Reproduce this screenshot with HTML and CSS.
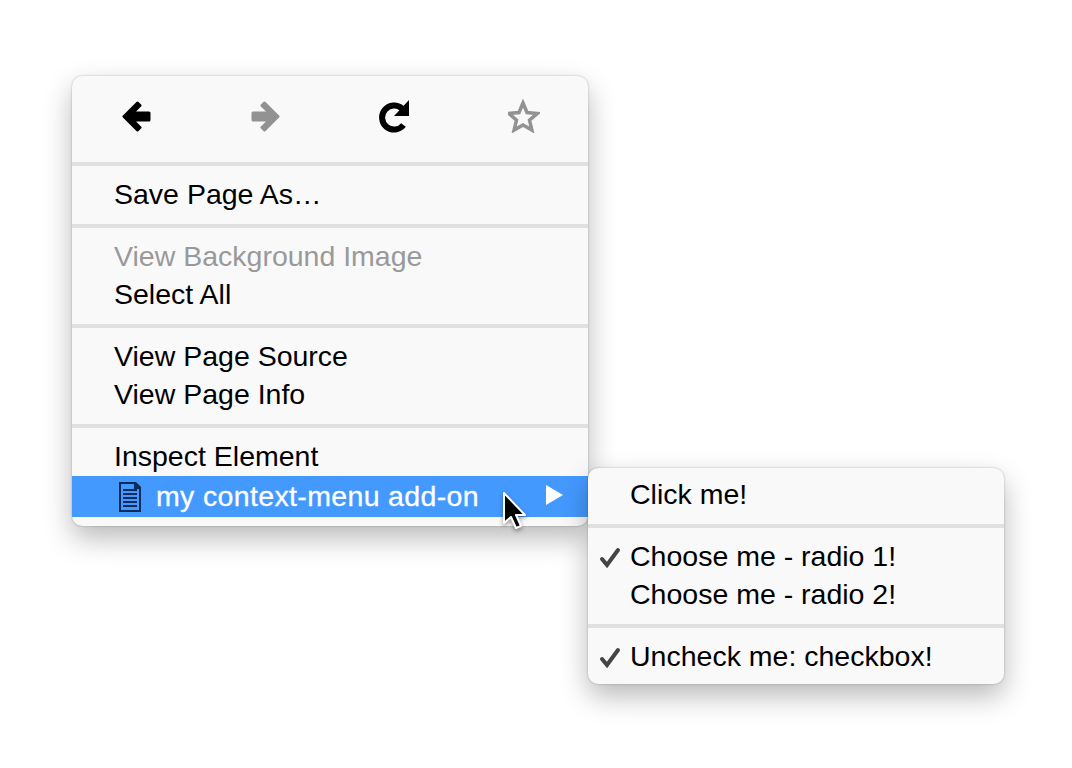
FILE: index.html
```html
<!DOCTYPE html>
<html>
	<head>
		<meta charset="utf-8" />
		<title>Context menu</title>
		<link rel="stylesheet" href="styles.css">
	</head>
	<body>
		<div class="menu main-menu">
			<div class="toolbar">
				<span class="tool">
					<svg width="30" height="34" viewBox="0 0 30 34"><path class="black" d="M2 17.500 15.500 4 18 6.500 10.500 14H27v7H10.500L18 28.500 15.500 31z"/></svg>
				</span>
				<span class="tool">
					<svg width="30" height="34" viewBox="0 0 30 34"><path class="gray" d="M27 17.500 13.500 4 11 6.500 18.500 14H2v7h16.500L11 28.500 13.500 31z"/></svg>
				</span>
				<span class="tool">
					<svg width="31" height="34" viewBox="0 0 31 34">
						<path class="ring" d="M24.500 26A12 12 0 1 1 23 9.500"/>
						<path class="tip" d="M30 1v16H15z"/>
					</svg>
				</span>
				<span class="tool">
					<svg width="32" height="34" viewBox="0 0 32 34"><path class="star" d="M15 4l4 9.500 10.300.900-7.800 6.700 2.400 10L15 26l-8.900 5.100 2.400-10-7.800-6.700L11 13.500z"/></svg>
				</span>
			</div>
			<div class="group">
				<div class="item">Save Page As…</div>
			</div>
			<div class="group">
				<div class="item disabled">View Background Image</div>
				<div class="item">Select All</div>
			</div>
			<div class="group">
				<div class="item">View Page Source</div>
				<div class="item">View Page Info</div>
			</div>
			<div class="group last">
				<div class="item">Inspect Element</div>
				<div class="item active">
					<svg class="doc" width="24" height="32" viewBox="0 0 24 32">
						<path class="doc-page" d="M2 2h15l5 5v23H2z"/>
						<path class="doc-fold" d="M16 1h2l5 5v2h-7z"/>
						<path class="doc-lines" d="M5 9h14M5 13h14M5 17h14M5 21h14M5 25h14"/>
					</svg>
					<span class="active-label">my context-menu add-on</span>
					<span class="arrow"></span>
				</div>
			</div>

			<svg class="cursor" width="30" height="42" viewBox="0 0 30 42">
				<path d="M3 2v30l7-6 5 11 5-2-5-11h9z"/>
			</svg>

			<div class="menu sub-menu">
				<div class="group first">
					<div class="item">Click me!</div>
				</div>
				<div class="group">
					<div class="item">
						<svg class="check" width="24" height="26" viewBox="0 0 24 26"><path d="M5 14l5 6L21 5"/></svg>
						Choose me - radio 1!
					</div>
					<div class="item">Choose me - radio 2!</div>
				</div>
				<div class="group last">
					<div class="item">
						<svg class="check" width="24" height="26" viewBox="0 0 24 26"><path d="M5 14l5 6L21 5"/></svg>
						Uncheck me: checkbox!
					</div>
				</div>
			</div>
		</div>
	</body>
</html>
```

FILE: styles.css
```css
html,body{
	height: 768px;
}
body{
	box-sizing: border-box;
	margin: 0;
	padding: 76px 0 0 72px;
	background-color: white;
	font-family: "Liberation Sans", Arial, sans-serif;
	font-size: 28.500px;
	color: #000;
}
.menu{
	background-color: #f9f9f9;
	border-radius: 10px;
	box-shadow: 0 0 2px rgba(0,0,0,.3), 0 12px 28px rgba(0,0,0,.28);
}
.main-menu{
	position: relative;
	width: 516px;
	height: 450px;
}
.toolbar{
	display: grid;
	grid-template-columns: repeat(4, 1fr);
	height: 86px;
	border-bottom: 4px solid #e0e0e0;
}
.tool{
	display: flex;
	justify-content: center;
	padding-top: 23px;
}
.tool svg{
	display: block;
}
.black{
	fill: #000;
	stroke: #000;
	stroke-width: 3;
	stroke-linejoin: round;
}
.gray{
	fill: #929292;
	stroke: #929292;
	stroke-width: 3;
	stroke-linejoin: round;
}
.ring{
	fill: none;
	stroke: #000;
	stroke-width: 6;
}
.tip{
	fill: #000;
}
.star{
	fill: none;
	stroke: #929292;
	stroke-width: 3.500;
	stroke-linejoin: miter;
}
.group{
	padding: 10px 0;
	border-bottom: 4px solid #e0e0e0;
}
.group.first{
	padding-top: 8px;
}
.group.last{
	padding-bottom: 0;
	border-bottom: 0;
}
.item{
	position: relative;
	padding-left: 42px;
	line-height: 36px;
	height: 38px;
	white-space: nowrap;
}
.disabled{
	color: #999;
}
.active{
	display: flex;
	align-items: center;
	height: 41px;
	padding-left: 46px;
	background-color: #4499ff;
	color: white;
}
.active-label{
	margin-left: 14px;
	margin-bottom: 2px;
	letter-spacing: .35px;
	-webkit-text-stroke: .3px white;
}
.doc{
	flex: none;
	margin-top: 1px;
}
.doc-page{
	fill: none;
	stroke: #0c2b5c;
	stroke-width: 2;
}
.doc-fold{
	fill: #0c2b5c;
}
.doc-lines{
	stroke: #0c2b5c;
	stroke-width: 2;
	fill: none;
}
.arrow{
	position: absolute;
	left: 474px;
	top: 9px;
	border-left: 17px solid white;
	border-top: 10px solid transparent;
	border-bottom: 10px solid transparent;
}
.cursor{
	position: absolute;
	z-index: 1;
	left: 429px;
	top: 415px;
	filter: drop-shadow(0 2px 2px rgba(0,0,0,.4));
}
.cursor path{
	fill: #000;
	stroke: white;
	stroke-width: 2;
	stroke-linejoin: round;
}
.sub-menu{
	position: absolute;
	left: 516px;
	top: 392px;
	width: 416px;
	height: 216px;
}
.check{
	position: absolute;
	left: 9px;
	top: 7px;
}
.check path{
	fill: none;
	stroke: #444;
	stroke-width: 4;
	stroke-linecap: round;
}
```
